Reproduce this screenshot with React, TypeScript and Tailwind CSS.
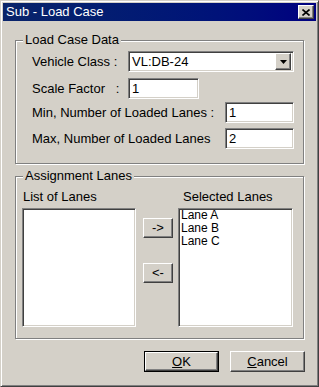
import React from 'react';

const sunken =
  'bg-white border border-t-[#808080] border-l-[#808080] border-b-white border-r-white shadow-[inset_1px_1px_0_#404040,inset_-1px_-1px_0_#d4d0c8]';
const raised =
  'bg-[#d4d0c8] border border-t-white border-l-white border-r-[#404040] border-b-[#404040] shadow-[inset_-1px_-1px_0_#808080]';

function GroupBox({ title, className, children }: { title: string; className: string; children: React.ReactNode }) {
  return (
    <div className={`relative border border-[#808080] shadow-[inset_1px_1px_0_#fff,1px_1px_0_#fff] ${className}`}>
      <span className="absolute left-[7px] top-[-9px] bg-[#d4d0c8] px-[2px] leading-[16px]">{title}</span>
      {children}
    </div>
  );
}

function Field({ value, className }: { value: string; className: string }) {
  return (
    <div className={`${sunken} flex items-center pl-[3px] h-[21px] ${className}`}>
      <span className="leading-[14px]">{value}</span>
    </div>
  );
}

function ComboBox({ value }: { value: string }) {
  return (
    <div className={`${sunken} flex items-center justify-between h-[21px] w-[166px] pl-[3px] pr-[2px]`}>
      <span className="leading-[14px]">{value}</span>
      <div className={`${raised} w-[16px] h-[17px] flex items-center justify-center`}>
        <svg width="7" height="4" viewBox="0 0 7 4">
          <path d="M0 0h7L3.5 4z" fill="#000" />
        </svg>
      </div>
    </div>
  );
}

function Button({ label, className }: { label: React.ReactNode; className: string }) {
  return (
    <div className={`${raised} flex items-center justify-center ${className}`}>
      <span className="leading-[14px]">{label}</span>
    </div>
  );
}

export default function App() {
  return (
    <div
      className="w-[319px] h-[387px] bg-[#d4d0c8] border border-t-[#d4d0c8] border-l-[#d4d0c8] border-r-[#404040] border-b-[#404040] shadow-[inset_1px_1px_0_#fff,inset_-1px_-1px_0_#808080] p-[2px] text-[13px] text-black"
      style={{ fontFamily: '"Liberation Sans", Arial, sans-serif' }}
    >
      {/* title bar */}
      <div className="h-[18px] bg-gradient-to-r from-[#0a246a] to-[#000080] flex items-center justify-between pl-[3px] pr-[2px]">
        <span className="text-white leading-[16px]">Sub - Load Case</span>
        <div className={`${raised} w-[16px] h-[14px] flex items-center justify-center`}>
          <svg width="8" height="7" viewBox="0 0 8 7">
            <path d="M0.5 0.5L7.5 6.5M7.5 0.5L0.5 6.5" stroke="#000" strokeWidth="1.6" />
          </svg>
        </div>
      </div>

      <div className="px-[12px]">
        <GroupBox title="Load Case Data" className="mt-[19px] h-[124px] pt-[10px] pl-[16px]">
          <div className="flex items-center">
            <span className="w-[96px]">Vehicle Class :</span>
            <ComboBox value="VL:DB-24" />
          </div>
          <div className="flex items-center mt-[6px]">
            <span className="w-[96px] whitespace-pre">Scale Factor   :</span>
            <Field value="1" className="w-[71px]" />
          </div>
          <div className="flex items-center mt-[3px]">
            <span className="w-[193px]">Min, Number of Loaded Lanes :</span>
            <Field value="1" className="w-[69px]" />
          </div>
          <div className="flex items-center mt-[5px]">
            <span className="w-[193px]">Max, Number of Loaded Lanes</span>
            <Field value="2" className="w-[69px]" />
          </div>
        </GroupBox>

        <GroupBox title="Assignment Lanes" className="mt-[12px] h-[163px] pt-[12px] pl-[6px]">
          <div className="flex">
            <div className="flex flex-col">
              <span className="leading-[16px] pl-[1px]">List of Lanes</span>
              <div className={`${sunken} mt-[3px] w-[114px] h-[119px]`} />
            </div>
            <div className="flex flex-col ml-[7px] mt-[29px] gap-[25px]">
              <Button label="->" className="w-[30px] h-[20px]" />
              <Button label="<-" className="w-[30px] h-[20px]" />
            </div>
            <div className="flex flex-col ml-[5px]">
              <span className="leading-[16px] pl-[5px]">Selected Lanes</span>
              <div className={`${sunken} mt-[3px] w-[115px] h-[119px] pl-[2px] flex flex-col text-[12px]`}>
                <span className="leading-[13px]">Lane A</span>
                <span className="leading-[13px]">Lane B</span>
                <span className="leading-[13px]">Lane C</span>
              </div>
            </div>
          </div>
        </GroupBox>

        <div className="flex justify-end gap-[11px] mt-[12px] -mr-[1px]">
          <div className="border border-black">
            <Button
              label={
                <>
                  <u>O</u>K
                </>
              }
              className="w-[73px] h-[19px]"
            />
          </div>
          <Button
            label={
              <>
                <u>C</u>ancel
              </>
            }
            className="w-[75px] h-[21px]"
          />
        </div>
      </div>
    </div>
  );
}
